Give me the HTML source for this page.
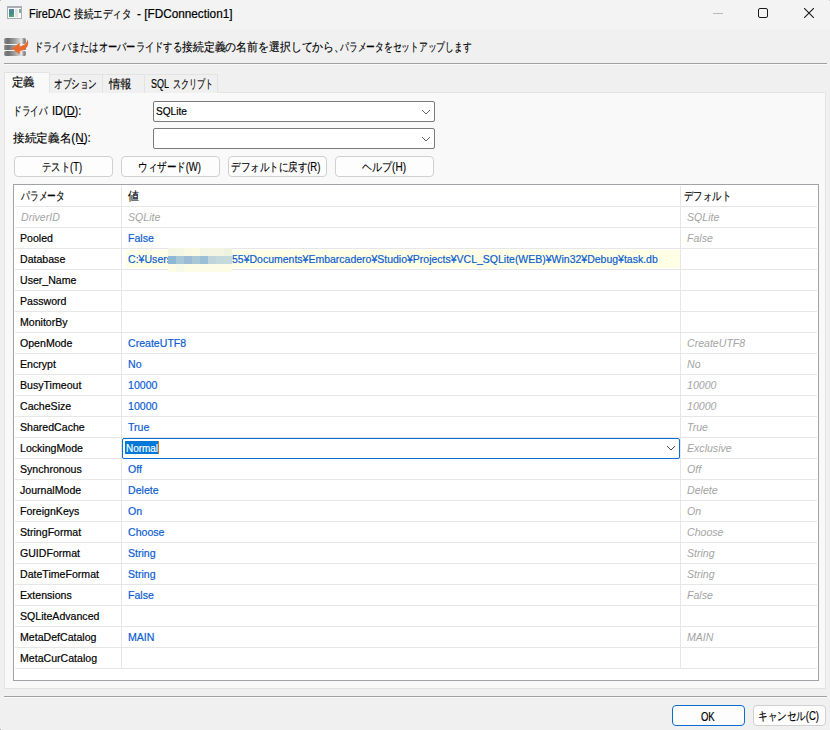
<!DOCTYPE html>
<html><head><meta charset="utf-8"><title>FireDAC</title>
<style>
html,body{margin:0;padding:0;}
body{width:830px;height:730px;overflow:hidden;position:relative;background:#f0f0f0;font-family:"Liberation Sans",sans-serif;}
.a{position:absolute;box-sizing:border-box;}
.t{position:absolute;white-space:nowrap;transform-origin:0 0;-webkit-text-stroke:0.2px currentColor;}
.cj{-webkit-text-stroke:0.15px currentColor;}
</style></head><body>
<!-- title bar -->
<div class="a" style="left:0;top:0;width:830px;height:29px;background:#f3f3f3"></div>
<!-- app icon -->
<div class="a" style="left:7px;top:6px;width:15px;height:13px;background:#fafafa;border:1px solid #a9adb1;border-top-width:2px"></div>
<div class="a" style="left:9px;top:9px;width:5px;height:8px;background:linear-gradient(160deg,#5b86c0,#3f8a8a 45%,#55b070)"></div>
<div class="a" style="left:15px;top:9px;width:3px;height:8px;background:#e2e2e2"></div>
<div class="a" style="left:19px;top:9px;width:2px;height:4px;background:linear-gradient(#7aa0d0,#70c070)"></div>
<!-- window controls -->
<div class="a" style="left:713px;top:13px;width:10px;height:1px;background:#b8b8b8"></div>
<div class="a" style="left:758px;top:8px;width:10px;height:10px;border:1px solid #1a1a1a;border-radius:2px"></div>
<svg class="a" style="left:804px;top:8px" width="10" height="10" viewBox="0 0 10 10"><path d="M0 0 L10 10 M10 0 L0 10" stroke="#1a1a1a" stroke-width="1.1" fill="none"/></svg>
<!-- header icon -->
<svg class="a" style="left:0;top:30px" width="32" height="30" viewBox="0 30 32 30">
<defs><linearGradient id="g1" x1="4" x2="26" gradientUnits="userSpaceOnUse"><stop offset="0" stop-color="#8a8a8a"/><stop offset="0.18" stop-color="#6e6e6e"/><stop offset="0.5" stop-color="#a2a2a2"/><stop offset="0.74" stop-color="#d8d8d8"/><stop offset="0.8" stop-color="#e6e6e6"/><stop offset="0.87" stop-color="#a4a4a4"/><stop offset="1" stop-color="#6c6c6c"/></linearGradient></defs>
<rect x="4.2" y="38" width="21.6" height="6" rx="1.5" fill="url(#g1)"/>
<rect x="4.2" y="45" width="21.6" height="5" rx="0.5" fill="url(#g1)"/>
<rect x="4.2" y="51" width="21.6" height="5" rx="1.5" fill="url(#g1)"/>
<path d="M12 48.6 L19.7 42.8 L19.7 46.4 C23.5 46.2 26.5 44 27.6 39.6 C29.2 43.5 28 50.5 19.7 51 L19.7 54.5 Z" fill="#e96a2c"/>
</svg>
<!-- separator -->
<div class="a" style="left:4px;top:63px;width:823px;height:1px;background:#a0a0a0"></div>
<div class="a" style="left:4px;top:64px;width:823px;height:1px;background:#fbfbfb"></div>
<!-- tab page -->
<div class="a" style="left:4px;top:92px;width:822px;height:597px;background:#f9f9f9;border:1px solid #e3e3e3"></div>
<!-- tabs -->
<div class="a" style="left:49px;top:74px;width:54px;height:19px;background:#f0f0f0;border:1px solid #e3e3e3;border-bottom:none"></div>
<div class="a" style="left:102px;top:74px;width:43px;height:19px;background:#f0f0f0;border:1px solid #e3e3e3;border-bottom:none"></div>
<div class="a" style="left:144px;top:74px;width:74px;height:19px;background:#f0f0f0;border:1px solid #e3e3e3;border-bottom:none"></div>
<div class="a" style="left:4px;top:72px;width:46px;height:21px;background:#f9f9f9;border:1px solid #e3e3e3;border-bottom:none"></div>
<!-- combos -->
<div class="a" style="left:153px;top:101px;width:282px;height:21px;background:#fff;border:1px solid #7a7a7a;border-radius:2px"></div>
<svg class="a" style="left:421px;top:109px" width="10" height="6" viewBox="0 0 10 6"><path d="M1 1 L5 5 L9 1" stroke="#606060" stroke-width="1" fill="none"/></svg>
<div class="a" style="left:153px;top:128px;width:282px;height:21px;background:#fff;border:1px solid #7a7a7a;border-radius:2px"></div>
<svg class="a" style="left:421px;top:136px" width="10" height="6" viewBox="0 0 10 6"><path d="M1 1 L5 5 L9 1" stroke="#606060" stroke-width="1" fill="none"/></svg>
<!-- buttons -->
<div class="a" style="left:14px;top:156px;width:99px;height:21px;background:#fdfdfd;border:1px solid #d0d0d0;border-radius:4px"></div>
<div class="a" style="left:121px;top:156px;width:99px;height:21px;background:#fdfdfd;border:1px solid #d0d0d0;border-radius:4px"></div>
<div class="a" style="left:228px;top:156px;width:99px;height:21px;background:#fdfdfd;border:1px solid #d0d0d0;border-radius:4px"></div>
<div class="a" style="left:335px;top:156px;width:99px;height:21px;background:#fdfdfd;border:1px solid #d0d0d0;border-radius:4px"></div>
<!-- grid -->
<div class="a" style="left:13px;top:184px;width:806px;height:497px;background:#fff;border:1px solid #9fa2a6"></div>
<div class="a" style="left:15px;top:206px;width:802px;height:1px;background:#e6e6e6"></div>
<div class="a" style="left:15px;top:227px;width:802px;height:1px;background:#e6e6e6"></div>
<div class="a" style="left:15px;top:248px;width:802px;height:1px;background:#e6e6e6"></div>
<div class="a" style="left:15px;top:269px;width:802px;height:1px;background:#e6e6e6"></div>
<div class="a" style="left:15px;top:290px;width:802px;height:1px;background:#e6e6e6"></div>
<div class="a" style="left:15px;top:311px;width:802px;height:1px;background:#e6e6e6"></div>
<div class="a" style="left:15px;top:332px;width:802px;height:1px;background:#e6e6e6"></div>
<div class="a" style="left:15px;top:353px;width:802px;height:1px;background:#e6e6e6"></div>
<div class="a" style="left:15px;top:374px;width:802px;height:1px;background:#e6e6e6"></div>
<div class="a" style="left:15px;top:395px;width:802px;height:1px;background:#e6e6e6"></div>
<div class="a" style="left:15px;top:416px;width:802px;height:1px;background:#e6e6e6"></div>
<div class="a" style="left:15px;top:437px;width:802px;height:1px;background:#e6e6e6"></div>
<div class="a" style="left:15px;top:458px;width:802px;height:1px;background:#e6e6e6"></div>
<div class="a" style="left:15px;top:479px;width:802px;height:1px;background:#e6e6e6"></div>
<div class="a" style="left:15px;top:500px;width:802px;height:1px;background:#e6e6e6"></div>
<div class="a" style="left:15px;top:521px;width:802px;height:1px;background:#e6e6e6"></div>
<div class="a" style="left:15px;top:542px;width:802px;height:1px;background:#e6e6e6"></div>
<div class="a" style="left:15px;top:563px;width:802px;height:1px;background:#e6e6e6"></div>
<div class="a" style="left:15px;top:584px;width:802px;height:1px;background:#e6e6e6"></div>
<div class="a" style="left:15px;top:605px;width:802px;height:1px;background:#e6e6e6"></div>
<div class="a" style="left:15px;top:626px;width:802px;height:1px;background:#e6e6e6"></div>
<div class="a" style="left:15px;top:647px;width:802px;height:1px;background:#e6e6e6"></div>
<div class="a" style="left:15px;top:668px;width:802px;height:1px;background:#e6e6e6"></div>
<div class="a" style="left:121px;top:186px;width:1px;height:482px;background:#e6e6e6"></div>
<div class="a" style="left:680px;top:186px;width:1px;height:482px;background:#e6e6e6"></div>
<!-- database highlight -->
<div class="a" style="left:126px;top:250px;width:554px;height:18px;background:#ffffe6"></div>
<!-- locking mode editor -->
<div class="a" style="left:122px;top:438px;width:558px;height:21px;background:#fff;border:1px solid #0b6fd3;border-radius:2px"></div>
<div class="a" style="left:125px;top:441px;width:33px;height:13px;background:#0078d7"></div>
<svg class="a" style="left:666px;top:445px" width="10" height="6" viewBox="0 0 10 6"><path d="M1 1 L5 5 L9 1" stroke="#4a4a4a" stroke-width="1" fill="none"/></svg>
<!-- accel underlines -->
<div class="a" style="left:66px;top:116px;width:9px;height:1px;background:#000"></div>
<div class="a" style="left:77px;top:143px;width:8px;height:1px;background:#000"></div>
<!-- caret -->
<div class="a" style="left:158px;top:441px;width:1px;height:13px;background:#d07020"></div>
<!-- corners -->
<div class="a" style="left:0;top:0;width:1px;height:1px;background:#c0c0c0"></div>
<div class="a" style="left:829px;top:0;width:1px;height:1px;background:#c8c8c8"></div>
<div class="a" style="left:0;top:729px;width:1px;height:1px;background:#b0b0b0"></div>
<!-- bottom separator -->
<div class="a" style="left:4px;top:696px;width:823px;height:1px;background:#a0a0a0"></div>
<div class="a" style="left:4px;top:697px;width:823px;height:1px;background:#fbfbfb"></div>
<!-- bottom buttons -->
<div class="a" style="left:672px;top:705px;width:73px;height:21px;background:#fdfdfd;border:1px solid #0a6ccf;border-radius:4px"></div>
<div class="a" style="left:753px;top:705px;width:73px;height:21px;background:#fdfdfd;border:1px solid #d0d0d0;border-radius:4px"></div>
<div class="t" style="left:28.80px;top:7.84px;font-size:12px;line-height:12px;color:#000;transform:scaleX(0.9040);">FireDAC</div>
<div class="t cj" style="left:74.40px;top:7.84px;font-size:12px;line-height:12px;color:#000;transform:scaleX(0.7917);">接続エディタ</div>
<div class="t" style="left:136.70px;top:7.84px;font-size:12px;line-height:12px;color:#000;transform:scaleX(0.9806);">- [FDConnection1]</div>
<div class="t cj" style="left:34.00px;top:40.84px;font-size:12px;line-height:12px;color:#000;transform:scaleX(0.7708);">ドライバまたはオーバーライドする</div>
<div class="t cj" style="left:182.30px;top:40.84px;font-size:12px;line-height:12px;color:#000;transform:scaleX(0.9056);">接続定義の名前を選択してから、</div>
<div class="t cj" style="left:340.20px;top:40.84px;font-size:12px;line-height:12px;color:#000;transform:scaleX(0.7306);">パラメータをセットアップします</div>
<div class="t cj" style="left:12.30px;top:75.84px;font-size:12px;line-height:12px;color:#000;transform:scaleX(0.9583);">定義</div>
<div class="t cj" style="left:53.50px;top:77.84px;font-size:12px;line-height:12px;color:#000;transform:scaleX(0.7167);">オプション</div>
<div class="t cj" style="left:109.30px;top:77.84px;font-size:12px;line-height:12px;color:#000;transform:scaleX(0.9583);">情報</div>
<div class="t" style="left:150.70px;top:77.84px;font-size:12px;line-height:12px;color:#000;transform:scaleX(0.7495);">SQL</div>
<div class="t cj" style="left:172.60px;top:77.84px;font-size:12px;line-height:12px;color:#000;transform:scaleX(0.6750);">スクリプト</div>
<div class="t cj" style="left:13.00px;top:105.34px;font-size:12px;line-height:12px;color:#000;transform:scaleX(0.7188);">ドライバ</div>
<div class="t" style="left:51.50px;top:105.34px;font-size:12px;line-height:12px;color:#000;transform:scaleX(0.9156);">ID(D):</div>
<div class="t cj" style="left:13.00px;top:132.34px;font-size:12px;line-height:12px;color:#000;transform:scaleX(0.9725);">接続定義名(N):</div>
<div class="t" style="left:155.60px;top:105.59px;font-size:11px;line-height:11px;color:#000;transform:scaleX(0.9200);">SQLite</div>
<div class="t cj" style="left:42.00px;top:161.34px;font-size:12px;line-height:12px;color:#000;transform:scaleX(0.7793);">テスト(T)</div>
<div class="t cj" style="left:138.20px;top:161.34px;font-size:12px;line-height:12px;color:#000;transform:scaleX(0.7942);">ウィザード(W)</div>
<div class="t cj" style="left:231.40px;top:161.34px;font-size:12px;line-height:12px;color:#000;transform:scaleX(0.7935);">デフォルトに戻す(R)</div>
<div class="t cj" style="left:361.50px;top:161.34px;font-size:12px;line-height:12px;color:#000;transform:scaleX(0.8354);">ヘルプ(H)</div>
<div class="t cj" style="left:20.90px;top:189.84px;font-size:12px;line-height:12px;color:#000;transform:scaleX(0.7333);">パラメータ</div>
<div class="t cj" style="left:128.30px;top:189.84px;font-size:12px;line-height:12px;color:#000;transform:scaleX(0.9167);">値</div>
<div class="t cj" style="left:684.00px;top:189.84px;font-size:12px;line-height:12px;color:#000;transform:scaleX(0.7833);">デフォルト</div>
<div class="t" style="left:20.50px;top:211.77px;font-size:11.5px;line-height:11.5px;color:#a4a4a4;transform:scaleX(0.9200);font-style:italic;-webkit-text-stroke:0">DriverID</div>
<div class="t" style="left:128.00px;top:211.77px;font-size:11.5px;line-height:11.5px;color:#a4a4a4;transform:scaleX(0.9200);font-style:italic;-webkit-text-stroke:0">SQLite</div>
<div class="t" style="left:687.00px;top:211.77px;font-size:11.5px;line-height:11.5px;color:#a4a4a4;transform:scaleX(0.9200);font-style:italic;-webkit-text-stroke:0">SQLite</div>
<div class="t" style="left:20.30px;top:232.77px;font-size:11.5px;line-height:11.5px;color:#000;transform:scaleX(0.9200);">Pooled</div>
<div class="t" style="left:128.00px;top:232.77px;font-size:11.5px;line-height:11.5px;color:#0a5cd2;transform:scaleX(0.9200);">False</div>
<div class="t" style="left:687.00px;top:232.77px;font-size:11.5px;line-height:11.5px;color:#a4a4a4;transform:scaleX(0.9200);font-style:italic;-webkit-text-stroke:0">False</div>
<div class="t" style="left:20.30px;top:253.77px;font-size:11.5px;line-height:11.5px;color:#000;transform:scaleX(0.9200);">Database</div>
<div class="t" style="left:128.00px;top:253.77px;font-size:11.5px;line-height:11.5px;color:#0a5cd2;transform:scaleX(0.9200);">C:¥Users</div>
<div class="t" style="left:231.80px;top:253.77px;font-size:11.5px;line-height:11.5px;color:#0a5cd2;transform:scaleX(0.9124);">55¥Documents¥Embarcadero¥Studio¥Projects¥VCL_SQLite(WEB)¥Win32¥Debug¥task.db</div>
<div class="t" style="left:20.30px;top:274.77px;font-size:11.5px;line-height:11.5px;color:#000;transform:scaleX(0.9200);">User_Name</div>
<div class="t" style="left:20.30px;top:295.77px;font-size:11.5px;line-height:11.5px;color:#000;transform:scaleX(0.9200);">Password</div>
<div class="t" style="left:20.30px;top:316.77px;font-size:11.5px;line-height:11.5px;color:#000;transform:scaleX(0.9200);">MonitorBy</div>
<div class="t" style="left:20.30px;top:337.77px;font-size:11.5px;line-height:11.5px;color:#000;transform:scaleX(0.9200);">OpenMode</div>
<div class="t" style="left:128.00px;top:337.77px;font-size:11.5px;line-height:11.5px;color:#0a5cd2;transform:scaleX(0.9200);">CreateUTF8</div>
<div class="t" style="left:687.00px;top:337.77px;font-size:11.5px;line-height:11.5px;color:#a4a4a4;transform:scaleX(0.9200);font-style:italic;-webkit-text-stroke:0">CreateUTF8</div>
<div class="t" style="left:20.30px;top:358.77px;font-size:11.5px;line-height:11.5px;color:#000;transform:scaleX(0.9200);">Encrypt</div>
<div class="t" style="left:128.00px;top:358.77px;font-size:11.5px;line-height:11.5px;color:#0a5cd2;transform:scaleX(0.9200);">No</div>
<div class="t" style="left:687.00px;top:358.77px;font-size:11.5px;line-height:11.5px;color:#a4a4a4;transform:scaleX(0.9200);font-style:italic;-webkit-text-stroke:0">No</div>
<div class="t" style="left:20.30px;top:379.77px;font-size:11.5px;line-height:11.5px;color:#000;transform:scaleX(0.9200);">BusyTimeout</div>
<div class="t" style="left:128.00px;top:379.77px;font-size:11.5px;line-height:11.5px;color:#0a5cd2;transform:scaleX(0.9200);">10000</div>
<div class="t" style="left:687.00px;top:379.77px;font-size:11.5px;line-height:11.5px;color:#a4a4a4;transform:scaleX(0.9200);font-style:italic;-webkit-text-stroke:0">10000</div>
<div class="t" style="left:20.30px;top:400.77px;font-size:11.5px;line-height:11.5px;color:#000;transform:scaleX(0.9200);">CacheSize</div>
<div class="t" style="left:128.00px;top:400.77px;font-size:11.5px;line-height:11.5px;color:#0a5cd2;transform:scaleX(0.9200);">10000</div>
<div class="t" style="left:687.00px;top:400.77px;font-size:11.5px;line-height:11.5px;color:#a4a4a4;transform:scaleX(0.9200);font-style:italic;-webkit-text-stroke:0">10000</div>
<div class="t" style="left:20.30px;top:421.77px;font-size:11.5px;line-height:11.5px;color:#000;transform:scaleX(0.9200);">SharedCache</div>
<div class="t" style="left:128.00px;top:421.77px;font-size:11.5px;line-height:11.5px;color:#0a5cd2;transform:scaleX(0.9200);">True</div>
<div class="t" style="left:687.00px;top:421.77px;font-size:11.5px;line-height:11.5px;color:#a4a4a4;transform:scaleX(0.9200);font-style:italic;-webkit-text-stroke:0">True</div>
<div class="t" style="left:20.30px;top:442.77px;font-size:11.5px;line-height:11.5px;color:#000;transform:scaleX(0.9200);">LockingMode</div>
<div class="t" style="left:125.50px;top:442.77px;font-size:11.5px;line-height:11.5px;color:#fff;transform:scaleX(0.8634);">Normal</div>
<div class="t" style="left:687.00px;top:442.77px;font-size:11.5px;line-height:11.5px;color:#a4a4a4;transform:scaleX(0.9200);font-style:italic;-webkit-text-stroke:0">Exclusive</div>
<div class="t" style="left:20.30px;top:463.77px;font-size:11.5px;line-height:11.5px;color:#000;transform:scaleX(0.9200);">Synchronous</div>
<div class="t" style="left:128.00px;top:463.77px;font-size:11.5px;line-height:11.5px;color:#0a5cd2;transform:scaleX(0.9200);">Off</div>
<div class="t" style="left:687.00px;top:463.77px;font-size:11.5px;line-height:11.5px;color:#a4a4a4;transform:scaleX(0.9200);font-style:italic;-webkit-text-stroke:0">Off</div>
<div class="t" style="left:20.30px;top:484.77px;font-size:11.5px;line-height:11.5px;color:#000;transform:scaleX(0.9200);">JournalMode</div>
<div class="t" style="left:128.00px;top:484.77px;font-size:11.5px;line-height:11.5px;color:#0a5cd2;transform:scaleX(0.9200);">Delete</div>
<div class="t" style="left:687.00px;top:484.77px;font-size:11.5px;line-height:11.5px;color:#a4a4a4;transform:scaleX(0.9200);font-style:italic;-webkit-text-stroke:0">Delete</div>
<div class="t" style="left:20.30px;top:505.77px;font-size:11.5px;line-height:11.5px;color:#000;transform:scaleX(0.9200);">ForeignKeys</div>
<div class="t" style="left:128.00px;top:505.77px;font-size:11.5px;line-height:11.5px;color:#0a5cd2;transform:scaleX(0.9200);">On</div>
<div class="t" style="left:687.00px;top:505.77px;font-size:11.5px;line-height:11.5px;color:#a4a4a4;transform:scaleX(0.9200);font-style:italic;-webkit-text-stroke:0">On</div>
<div class="t" style="left:20.30px;top:526.77px;font-size:11.5px;line-height:11.5px;color:#000;transform:scaleX(0.9200);">StringFormat</div>
<div class="t" style="left:128.00px;top:526.77px;font-size:11.5px;line-height:11.5px;color:#0a5cd2;transform:scaleX(0.9200);">Choose</div>
<div class="t" style="left:687.00px;top:526.77px;font-size:11.5px;line-height:11.5px;color:#a4a4a4;transform:scaleX(0.9200);font-style:italic;-webkit-text-stroke:0">Choose</div>
<div class="t" style="left:20.30px;top:547.77px;font-size:11.5px;line-height:11.5px;color:#000;transform:scaleX(0.9200);">GUIDFormat</div>
<div class="t" style="left:128.00px;top:547.77px;font-size:11.5px;line-height:11.5px;color:#0a5cd2;transform:scaleX(0.9200);">String</div>
<div class="t" style="left:687.00px;top:547.77px;font-size:11.5px;line-height:11.5px;color:#a4a4a4;transform:scaleX(0.9200);font-style:italic;-webkit-text-stroke:0">String</div>
<div class="t" style="left:20.30px;top:568.77px;font-size:11.5px;line-height:11.5px;color:#000;transform:scaleX(0.9200);">DateTimeFormat</div>
<div class="t" style="left:128.00px;top:568.77px;font-size:11.5px;line-height:11.5px;color:#0a5cd2;transform:scaleX(0.9200);">String</div>
<div class="t" style="left:687.00px;top:568.77px;font-size:11.5px;line-height:11.5px;color:#a4a4a4;transform:scaleX(0.9200);font-style:italic;-webkit-text-stroke:0">String</div>
<div class="t" style="left:20.30px;top:589.77px;font-size:11.5px;line-height:11.5px;color:#000;transform:scaleX(0.9200);">Extensions</div>
<div class="t" style="left:128.00px;top:589.77px;font-size:11.5px;line-height:11.5px;color:#0a5cd2;transform:scaleX(0.9200);">False</div>
<div class="t" style="left:687.00px;top:589.77px;font-size:11.5px;line-height:11.5px;color:#a4a4a4;transform:scaleX(0.9200);font-style:italic;-webkit-text-stroke:0">False</div>
<div class="t" style="left:20.30px;top:610.77px;font-size:11.5px;line-height:11.5px;color:#000;transform:scaleX(0.9200);">SQLiteAdvanced</div>
<div class="t" style="left:20.30px;top:631.77px;font-size:11.5px;line-height:11.5px;color:#000;transform:scaleX(0.9200);">MetaDefCatalog</div>
<div class="t" style="left:128.00px;top:631.77px;font-size:11.5px;line-height:11.5px;color:#0a5cd2;transform:scaleX(0.9200);">MAIN</div>
<div class="t" style="left:687.00px;top:631.77px;font-size:11.5px;line-height:11.5px;color:#a4a4a4;transform:scaleX(0.9200);font-style:italic;-webkit-text-stroke:0">MAIN</div>
<div class="t" style="left:20.30px;top:652.77px;font-size:11.5px;line-height:11.5px;color:#000;transform:scaleX(0.9200);">MetaCurCatalog</div>
<div class="t" style="left:700.70px;top:710.84px;font-size:12px;line-height:12px;color:#000;transform:scaleX(0.7899);">OK</div>
<div class="t cj" style="left:757.90px;top:709.64px;font-size:12px;line-height:12px;color:#000;transform:scaleX(0.7956);">キャンセル(C)</div>
<script>(function(){var W=[41.6, 57.0, 95.5, 148.0, 163.0, 131.5, 23.0, 43.0, 23.0, 18.0, 40.5, 34.5, 29.3, 77.8, 30.95, 40.0, 63.0, 89.4, 44.0, 44.0, 11.0, 47.0, 38.8, 32.36, 32.36, 32.95, 25.88, 25.88, 45.3, 44.1, 425.8, 56.45, 46.46, 47.64, 52.35, 58.22, 58.22, 35.88, 13.53, 13.53, 61.35, 29.43, 29.43, 51.18, 29.43, 29.43, 64.7, 21.38, 20.97, 62.93, 32.0, 44.69, 61.76, 13.93, 14.12, 61.17, 30.59, 30.59, 59.4, 14.12, 14.12, 61.15, 36.47, 36.47, 59.96, 27.64, 27.64, 78.98, 27.64, 27.64, 51.76, 25.88, 25.88, 79.41, 76.46, 26.45, 26.45, 77.04, 13.7, 61.0];var e=document.querySelectorAll(".t");for(var i=0;i<e.length&&i<W.length;i++){var el=e[i];var old=el.style.transform;el.style.transform="none";var w=el.getBoundingClientRect().width;if(w>0){el.style.transform="scaleX("+(W[i]/w).toFixed(4)+")";}else{el.style.transform=old;}}})();</script>
<!-- blur block -->
<div class="a" style="left:168px;top:248px;width:8px;height:8px;background:#f4f6e4"></div>
<div class="a" style="left:176px;top:248px;width:8px;height:8px;background:#f5f7e5"></div>
<div class="a" style="left:184px;top:248px;width:8px;height:8px;background:#fafae4"></div>
<div class="a" style="left:192px;top:248px;width:8px;height:8px;background:#fbfbe5"></div>
<div class="a" style="left:200px;top:248px;width:8px;height:8px;background:#f2f5e3"></div>
<div class="a" style="left:208px;top:248px;width:8px;height:8px;background:#f4f6e3"></div>
<div class="a" style="left:216px;top:248px;width:8px;height:8px;background:#f4f6e3"></div>
<div class="a" style="left:224px;top:248px;width:8px;height:8px;background:#edf2e1"></div>
<div class="a" style="left:168px;top:256px;width:8px;height:8px;background:#8db8d6"></div>
<div class="a" style="left:176px;top:256px;width:8px;height:8px;background:#a8c7d7"></div>
<div class="a" style="left:184px;top:256px;width:8px;height:8px;background:#9dbad6"></div>
<div class="a" style="left:192px;top:256px;width:8px;height:8px;background:#a8c8d6"></div>
<div class="a" style="left:200px;top:256px;width:8px;height:8px;background:#9bbfd6"></div>
<div class="a" style="left:208px;top:256px;width:8px;height:8px;background:#c0d4dc"></div>
<div class="a" style="left:216px;top:256px;width:8px;height:8px;background:#c4d9dc"></div>
<div class="a" style="left:224px;top:256px;width:8px;height:8px;background:#c4dadb"></div>
<div class="a" style="left:168px;top:264px;width:8px;height:8px;background:#fcfce7"></div>
<div class="a" style="left:176px;top:264px;width:8px;height:8px;background:#f7f9e9"></div>
<div class="a" style="left:184px;top:264px;width:8px;height:8px;background:#fdfde7"></div>
<div class="a" style="left:192px;top:264px;width:8px;height:8px;background:#fdfde7"></div>
<div class="a" style="left:200px;top:264px;width:8px;height:8px;background:#fdfde7"></div>
<div class="a" style="left:208px;top:264px;width:8px;height:8px;background:#fdfde7"></div>
<div class="a" style="left:216px;top:264px;width:8px;height:8px;background:#fdfde7"></div>
<div class="a" style="left:224px;top:264px;width:8px;height:8px;background:#fdfde7"></div>
</body></html>
